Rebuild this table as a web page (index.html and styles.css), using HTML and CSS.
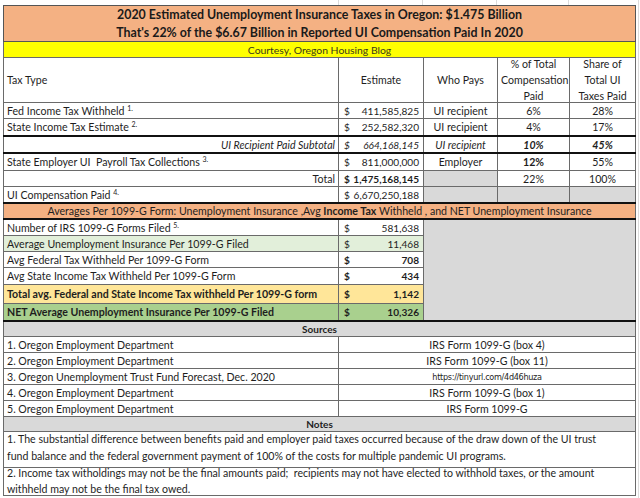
FILE: index.html
```html
<!DOCTYPE html>
<html>
<head>
<meta charset="utf-8">
<link rel="stylesheet" href="styles.css">
</head>
<body>
<div class="sheet">
<table class="grid">
  <colgroup>
    <col class="c-a"><col class="c-b"><col class="c-c"><col class="c-d"><col class="c-e">
  </colgroup>
  <tr class="r-title">
    <td colspan="5" class="title">2020 Estimated Unemployment Insurance Taxes in Oregon: $1.475 Billion<br>That's 22% of the $6.67 Billion in Reported UI Compensation Paid In 2020</td>
  </tr>
  <tr class="r-court">
    <td colspan="5" class="courtesy">Courtesy, Oregon Housing Blog</td>
  </tr>
  <tr class="r-head">
    <td class="left">Tax Type</td>
    <td class="center">Estimate</td>
    <td class="center">Who Pays</td>
    <td class="center"><div class="hd">% of Total<br>Compensation<br>Paid</div></td>
    <td class="center"><div class="hd">Share of<br>Total UI<br>Taxes Paid</div></td>
  </tr>
  <tr class="r-d1">
    <td class="left">Fed Income Tax Withheld <sup>1.</sup></td>
    <td class="money"><span>$</span><span>411,585,825</span></td>
    <td class="center">UI recipient</td>
    <td class="center">6%</td>
    <td class="center">28%</td>
  </tr>
  <tr class="r-d2">
    <td class="left">State Income Tax Estimate <sup>2.</sup></td>
    <td class="money"><span>$</span><span>252,582,320</span></td>
    <td class="center">UI recipient</td>
    <td class="center">4%</td>
    <td class="center">17%</td>
  </tr>
  <tr class="r-sub">
    <td class="right it">UI Recipient Paid Subtotal</td>
    <td class="money it"><span>$</span><span>664,168,145</span></td>
    <td class="center it">UI recipient</td>
    <td class="center it bd">10%</td>
    <td class="center it bd">45%</td>
  </tr>
  <tr class="r-d3">
    <td class="left">State Employer UI&nbsp; Payroll Tax Collections <sup>3.</sup></td>
    <td class="money"><span>$</span><span>811,000,000</span></td>
    <td class="center">Employer</td>
    <td class="center bd">12%</td>
    <td class="center">55%</td>
  </tr>
  <tr class="r-d4">
    <td class="right">Total</td>
    <td class="money bd"><span>$</span><span>1,475,168,145</span></td>
    <td class="gray"></td>
    <td class="center">22%</td>
    <td class="center">100%</td>
  </tr>
  <tr class="r-d5">
    <td class="left">UI Compensation Paid <sup>4.</sup></td>
    <td class="money"><span>$</span><span>6,670,250,188</span></td>
    <td class="gray"></td>
    <td class="gray"></td>
    <td class="gray"></td>
  </tr>
  <tr class="r-avg">
    <td colspan="5" class="avgbar">Averages Per 1099-G Form: Unemployment Insurance ,Avg <b>Income Tax</b> Withheld , and NET Unemployment Insurance</td>
  </tr>
  <tr class="r-a1">
    <td class="left">Number of IRS 1099-G Forms Filed <sup>5.</sup></td>
    <td class="money"><span>$</span><span>581,638</span></td>
    <td colspan="3" rowspan="6" class="gray"></td>
  </tr>
  <tr class="r-a2 lgreen">
    <td class="left">Average Unemployment Insurance Per 1099-G Filed</td>
    <td class="money"><span>$</span><span>11,468</span></td>
  </tr>
  <tr class="r-a3">
    <td class="left">Avg Federal Tax Withheld Per 1099-G Form</td>
    <td class="money bd"><span>$</span><span>708</span></td>
  </tr>
  <tr class="r-a4">
    <td class="left">Avg State Income Tax Withheld Per 1099-G Form</td>
    <td class="money bd"><span>$</span><span>434</span></td>
  </tr>
  <tr class="r-a5 tan">
    <td class="left bd">Total avg. Federal and State Income Tax withheld Per 1099-G form</td>
    <td class="money bd"><span>$</span><span>1,142</span></td>
  </tr>
  <tr class="r-a6 green">
    <td class="left bd">NET Average Unemployment Insurance Per 1099-G Filed</td>
    <td class="money bd"><span>$</span><span>10,326</span></td>
  </tr>
  <tr class="r-src">
    <td colspan="5" class="sechead">Sources</td>
  </tr>
  <tr class="r-s">
    <td class="left">1. Oregon Employment Department</td>
    <td colspan="4" class="center">IRS Form 1099-G (box 4)</td>
  </tr>
  <tr class="r-s">
    <td class="left">2. Oregon Employment Department</td>
    <td colspan="4" class="center">IRS Form 1099-G (box 11)</td>
  </tr>
  <tr class="r-s">
    <td class="left">3. Oregon Unemployment Trust Fund Forecast, Dec. 2020</td>
    <td colspan="4" class="center url">https://tinyurl.com/4d46huza</td>
  </tr>
  <tr class="r-s">
    <td class="left">4. Oregon Employment Department</td>
    <td colspan="4" class="center">IRS Form 1099-G (box 1)</td>
  </tr>
  <tr class="r-s">
    <td class="left">5. Oregon Employment Department</td>
    <td colspan="4" class="center">IRS Form 1099-G</td>
  </tr>
  <tr class="r-notes">
    <td colspan="5" class="sechead">Notes</td>
  </tr>
  <tr class="r-n1">
    <td colspan="5" class="note n1"><div class="ntx1">1. The substantial difference between benefits paid and employer paid taxes occurred because of the draw down of the UI trust<br>fund balance and the federal government payment of 100% of the costs for multiple pandemic UI programs.</div></td>
  </tr>
  <tr class="r-n2">
    <td colspan="5" class="note n2"><div class="ntx2">2. Income tax witholdings may not be the final amounts paid;&nbsp; recipients may not have elected to withhold taxes, or the amount<br>withheld may not be the final tax owed.</div></td>
  </tr>
</table>
</div>
</body>
</html>
```

FILE: styles.css
```css
html, body {
  margin: 0;
  padding: 0;
  background: #ffffff;
}
body {
  font-family: Lato, "Open Sans", sans-serif;
  font-size: 10.6px;
  color: #1e1e1e;
}
.sheet {
  padding: 5px 0 0 3px;
  width: 640px;
  height: 498px;
  box-sizing: border-box;
  overflow: hidden;
  background:
    linear-gradient(#dcdcdc, #dcdcdc) 338px 0 / 1px 5px no-repeat,
    linear-gradient(#dcdcdc, #dcdcdc) 422px 0 / 1px 5px no-repeat,
    linear-gradient(#dcdcdc, #dcdcdc) 496px 0 / 1px 5px no-repeat,
    linear-gradient(#dcdcdc, #dcdcdc) 568px 0 / 1px 5px no-repeat,
    linear-gradient(#dcdcdc, #dcdcdc) 638px 0 / 1px 498px no-repeat,
    #ffffff;
}
.grid {
  border-collapse: collapse;
  table-layout: fixed;
  width: 632px;
}
.c-a { width: 335px; }
.c-b { width: 85px; }
.c-c { width: 74px; }
.c-d { width: 72px; }
.c-e { width: 66px; }

.grid td {
  border: 1px solid #6a6a6a;
  padding: 0 3px;
  line-height: 14px;
  white-space: nowrap;
  overflow: hidden;
  vertical-align: middle;
}
sup {
  font-size: 7px;
  line-height: 0;
  vertical-align: 4px;
}
.left { text-align: left; }
.right { text-align: right; }
.center { text-align: center; }
.it { font-style: italic; }
.bd { font-weight: bold; }

.grid .title {
  background: #f4b183;
  text-align: center;
  font-weight: bold;
  font-size: 12.4px;
  line-height: 17.5px;
  height: 35px;
  color: #1a1a1a;
  border-color: #555;
}
.grid .courtesy {
  background: #ffff00;
  text-align: center;
  height: 15px;
  font-size: 10.4px;
  color: #3a3a1a;
}
.r-head td {
  height: 44px;
}
.hd {
  line-height: 16px;
  margin: -2px 0;
}
.r-d1 td { height: 15px; }
.r-d2 td { height: 16px; }
.grid .r-sub td {
  height: 15px;
  border-top: 2px solid #111;
  border-bottom: 2px solid #111;
}
.r-d3 td { height: 16px; }
.r-d4 td { height: 15px; }
.r-d5 td { height: 15px; }
.grid .avgbar {
  height: 14px;
  background: #f4b183;
  text-align: center;
  border-top: 2px solid #111;
  border-bottom: 2px solid #111;
}
.r-a1 td, .r-a2 td, .r-a3 td { height: 15px; }
.r-a4 td { height: 16px; }
.r-a5 td { height: 18px; }
.r-a6 td { height: 16px; }
.lgreen td { background: #e2efda; }
.tan td { background: #ffe699; }
.green td { background: #a9d08e; }
.grid td.gray { background: #d9d9d9; }
.grid .money {
  font-size: 10.1px;
  padding: 0 4px 0 5px;
}
.money span:first-child {
  float: left;
}
.money span:last-child {
  float: right;
}
.grid .sechead {
  background: #d9d9d9;
  text-align: center;
  font-weight: bold;
  font-size: 10px;
  height: 14px;
}
.grid .r-src td { border-top: 2px solid #111; }
.r-s td { height: 15px; }
.grid .url {
  font-family: "Liberation Sans Narrow", "DejaVu Sans Condensed", "Liberation Sans", sans-serif;
  font-size: 9px;
  letter-spacing: -0.3px;
}
.grid .n1 {
  height: 35px;
  vertical-align: top;
}
.ntx1 {
  line-height: 17px;
  margin: -1px 0 -2px;
}
.grid .n2 {
  height: 27px;
  vertical-align: top;
}
.ntx2 {
  line-height: 16px;
  margin: -3px 0 -3px;
}
```
